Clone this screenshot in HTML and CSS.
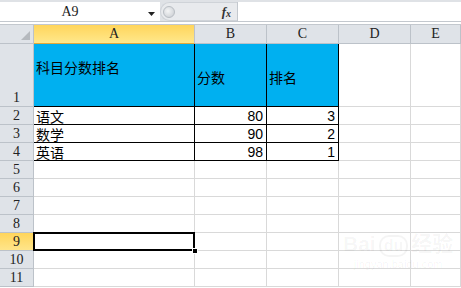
FILE: index.html
```html
<!DOCTYPE html>
<html lang="zh-CN">
<head>
    <meta charset="UTF-8">
    <title>科目分数排名</title>
    <link rel="stylesheet" href="styles.css">
</head>
<body>
    <div class="formula-bar">
        <div class="name-box">
            <span class="name">A9</span>
            <svg class="dropdown" width="7" height="4" viewBox="0 0 7 4"><path d="M0 0h7L3.5 4z" fill="#222"/></svg>
        </div>
        <div class="splitter">
            <span class="knob"></span>
            <span class="fx">f<sub>x</sub></span>
        </div>
        <div class="formula-input"></div>
    </div>
    <div class="bar-gap"></div>

    <div class="sheet">
        <!-- column headers -->
        <div class="corner"><span class="corner-mark"></span></div>
        <div class="col-head active">A</div>
        <div class="col-head">B</div>
        <div class="col-head">C</div>
        <div class="col-head">D</div>
        <div class="col-head">E</div>

        <!-- row 1 -->
        <div class="row-head">1</div>
        <div class="cell fill data title">科目分数排名</div>
        <div class="cell fill data head">分数</div>
        <div class="cell fill data head">排名</div>
        <div class="cell"></div>
        <div class="cell"></div>

        <!-- rows 2-4 -->
        <div class="row-head">2</div>
        <div class="cell data">语文</div>
        <div class="cell data num">80</div>
        <div class="cell data num">3</div>
        <div class="cell"></div>
        <div class="cell"></div>

        <div class="row-head">3</div>
        <div class="cell data">数学</div>
        <div class="cell data num">90</div>
        <div class="cell data num">2</div>
        <div class="cell"></div>
        <div class="cell"></div>

        <div class="row-head">4</div>
        <div class="cell data">英语</div>
        <div class="cell data num">98</div>
        <div class="cell data num">1</div>
        <div class="cell"></div>
        <div class="cell"></div>

        <!-- empty rows -->
        <div class="row-head">5</div>
        <div class="cell"></div><div class="cell"></div><div class="cell"></div><div class="cell"></div><div class="cell"></div>
        <div class="row-head">6</div>
        <div class="cell"></div><div class="cell"></div><div class="cell"></div><div class="cell"></div><div class="cell"></div>
        <div class="row-head">7</div>
        <div class="cell"></div><div class="cell"></div><div class="cell"></div><div class="cell"></div><div class="cell"></div>
        <div class="row-head">8</div>
        <div class="cell"></div><div class="cell"></div><div class="cell"></div><div class="cell"></div><div class="cell"></div>
        <div class="row-head active">9</div>
        <div class="cell selected"><span class="fill-handle"></span></div>
        <div class="cell"></div><div class="cell"></div><div class="cell"></div><div class="cell"></div>
        <div class="row-head">10</div>
        <div class="cell"></div><div class="cell"></div><div class="cell"></div><div class="cell"></div><div class="cell"></div>
        <div class="row-head">11</div>
        <div class="cell"></div><div class="cell"></div><div class="cell"></div><div class="cell"></div><div class="cell"></div>
    </div>

    <div class="watermark">
        <div class="wm-logo">Bai<span class="wm-du">du</span>经验</div>
        <div class="wm-url">jingyan.baidu.com</div>
    </div>
</body>
</html>
```

FILE: styles.css
```css
* {
    box-sizing: border-box;
    margin: 0;
    padding: 0;
}

body {
    position: relative;
    width: 461px;
    height: 288px;
    overflow: hidden;
    background-color: #fff;
    font-family: "Liberation Serif", serif;
    color: #222;
}

/* Formula bar */
.formula-bar {
    display: flex;
    height: 22px;
    padding-top: 2px;
    background-color: #dfe2e6;
    border-bottom: 1px solid #c3c8ce;
}

.name-box {
    position: relative;
    width: 160px;
    height: 19px;
    background-color: #fff;
    display: flex;
    align-items: center;
    justify-content: center;
    font-size: 14px;
}

.name-box .name {
    margin-left: -20px;
}

.dropdown {
    position: absolute;
    left: 148px;
    top: 10px;
}

.splitter {
    width: 77px;
    height: 19px;
    display: flex;
    align-items: center;
    justify-content: space-between;
    padding: 0 6px 0 2px;
    background-color: #e8eaed;
    border-radius: 10px 0 0 10px;
    border: 1px solid #cfd3d8;
    border-right: none;
}

.knob {
    width: 12px;
    height: 12px;
    border-radius: 50%;
    background: radial-gradient(circle at 40% 40%, #f4f5f6, #c6cacf);
    border: 1px solid #b8bdc3;
}

.fx {
    font-family: "Liberation Serif", serif;
    font-style: italic;
    font-weight: bold;
    font-size: 13px;
    color: #333;
}

.fx sub {
    font-size: 10px;
    vertical-align: -1px;
}

.formula-input {
    flex: 1;
    height: 19px;
    background-color: #fff;
    border-left: 1px solid #c3c8ce;
}

.bar-gap {
    height: 3px;
    background-color: #fff;
    border-bottom: 1px solid #c3c8ce;
}

/* Sheet grid */
.sheet {
    display: grid;
    grid-template-columns: 34px 161px 72px 72px 72px 50px;
    grid-template-rows: 19px 63px repeat(10, 18px);
}

.corner,
.col-head,
.row-head {
    background-color: #dfe3e8;
    border-right: 1px solid #bcc2c9;
    border-bottom: 1px solid #bcc2c9;
    font-size: 14px;
    color: #222;
}

.corner {
    position: relative;
}

.corner-mark {
    position: absolute;
    right: 3px;
    bottom: 3px;
    width: 0;
    height: 0;
    border-left: 9px solid transparent;
    border-bottom: 9px solid #b5b9be;
}

.col-head {
    display: flex;
    align-items: center;
    justify-content: center;
}

.row-head {
    display: flex;
    align-items: flex-end;
    justify-content: center;
    line-height: 16px;
}

.col-head.active {
    background: linear-gradient(#ffd55b, #ffe88c);
    border-bottom-color: #e2a83a;
}

.row-head.active {
    background: linear-gradient(#ffd55b, #ffe58a);
    border-right-color: #e2a83a;
}

.cell {
    position: relative;
    border-right: 1px solid #d9d9d9;
    border-bottom: 1px solid #d9d9d9;
    font-family: "Noto Sans CJK SC", sans-serif;
    font-size: 14px;
    line-height: 16px;
    color: #000;
    padding-left: 2px;
    display: flex;
    align-items: flex-end;
}

.cell.data {
    border-right-color: #000;
    border-bottom-color: #000;
}

.cell.fill {
    background-color: #00b0f0;
    align-items: flex-start;
}

.cell.title {
    padding-top: 15px;
}

.cell.head {
    padding-top: 25px;
}

.cell.num {
    justify-content: flex-end;
    padding-right: 3px;
    font-family: "Liberation Sans", sans-serif;
    font-size: 14px;
    line-height: 16px;
}

.cell.selected::after {
    content: "";
    position: absolute;
    top: -1px;
    left: -1px;
    right: -1px;
    bottom: -1px;
    border: 2px solid #000;
}

.fill-handle {
    position: absolute;
    right: -4px;
    bottom: -4px;
    width: 6px;
    height: 6px;
    background-color: #000;
    border: 1px solid #fff;
    z-index: 1;
}

/* Watermark */
.watermark {
    position: absolute;
    left: 343px;
    top: 232px;
    color: rgba(0, 0, 0, 0.045);
    font-family: "Liberation Sans", "Noto Sans CJK SC", sans-serif;
    text-align: center;
}

.wm-logo {
    font-size: 21px;
    font-weight: bold;
    line-height: 24px;
}

.wm-du {
    display: inline-block;
    padding: 0 3px;
    border: 2px solid rgba(0, 0, 0, 0.045);
    border-radius: 10px;
    font-size: 16px;
    line-height: 18px;
    margin: 0 3px;
}

.wm-url {
    font-size: 11px;
    line-height: 14px;
}
```
